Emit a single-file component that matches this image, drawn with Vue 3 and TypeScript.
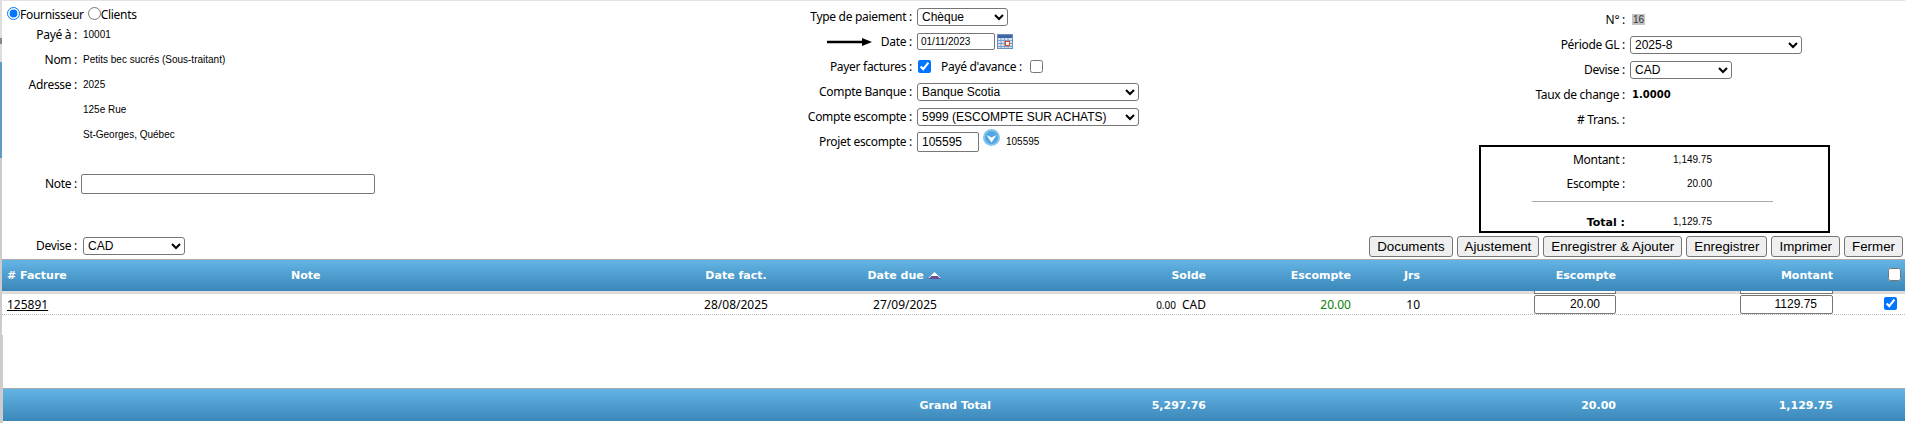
<template>
  <div class="page">
    <div class="edge"></div>

    <section class="top">
      <div class="col col-left">
        <div class="radios">
          <label><input type="radio" name="kind" checked />Fournisseur</label>
          <label><input type="radio" name="kind" />Clients</label>
        </div>
        <div v-for="line in addressLines" :key="line.value" class="row">
          <span class="lab lab-left">{{ line.label }}</span>
          <span class="val val-left">{{ line.value }}</span>
        </div>
        <div class="row note-row">
          <span class="lab lab-left">Note :</span>
          <input class="note-input" type="text" />
        </div>
        <div class="row devise-row">
          <span class="lab lab-left">Devise :</span>
          <select class="sel devise-left"><option>CAD</option></select>
        </div>
      </div>

      <div class="col col-mid">
        <div class="row">
          <span class="lab lab-mid">Type de paiement :</span>
          <select class="sel sel-type"><option>Chèque</option></select>
        </div>
        <div class="row">
          <span class="lab lab-mid lab-arrow">
            <svg class="arrow" width="46" height="10" viewBox="0 0 46 10">
              <path d="M0 5h36" stroke="#000" stroke-width="2.4" />
              <path d="M35 1l10 4-10 4z" fill="#000" />
            </svg>
            Date :
          </span>
          <input class="date-input" type="text" value="01/11/2023" />
          <svg class="cal" width="16" height="15" viewBox="0 0 16 15">
            <rect x="0.5" y="0.5" width="15" height="14" fill="#d5e2f2" stroke="#6d8fbd" />
            <rect x="1" y="1" width="14" height="3" fill="#3e66a3" />
            <path d="M1 6.500h14M1 9.500h14M1 12.500h14M4 4v10M7.500 4v10M11 4v10" stroke="#7f9fcb" />
            <rect x="8.500" y="7.500" width="4" height="4" fill="#fff" stroke="#e2461f" />
          </svg>
        </div>
        <div class="row">
          <span class="lab lab-mid">Payer factures :</span>
          <input class="check check-pay" type="checkbox" checked />
          <span class="lab advance">Payé d'avance :</span>
          <input class="check" type="checkbox" />
        </div>
        <div class="row">
          <span class="lab lab-mid">Compte Banque :</span>
          <select class="sel sel-wide"><option>Banque Scotia</option></select>
        </div>
        <div class="row">
          <span class="lab lab-mid">Compte escompte :</span>
          <select class="sel sel-wide"><option>5999 (ESCOMPTE SUR ACHATS)</option></select>
        </div>
        <div class="row">
          <span class="lab lab-mid">Projet escompte :</span>
          <input class="project-input" type="text" value="105595" />
          <svg class="drop" width="17" height="17" viewBox="0 0 17 17">
            <circle cx="8.500" cy="8.500" r="8.500" fill="#85c4ee" />
            <circle cx="8.500" cy="8.500" r="6.500" fill="#4fa6e2" />
            <path d="M3.500 6L8.500 13.500l5-7.500-5 2.500z" fill="#fff" />
          </svg>
          <span class="val project-code">105595</span>
        </div>
      </div>

      <div class="col col-right">
        <div class="row">
          <span class="lab lab-right">N° :</span>
          <span class="val trans-no">16</span>
        </div>
        <div class="row">
          <span class="lab lab-right">Période GL :</span>
          <select class="sel sel-period"><option>2025-8</option></select>
        </div>
        <div class="row">
          <span class="lab lab-right">Devise :</span>
          <select class="sel sel-devise"><option>CAD</option></select>
        </div>
        <div class="row">
          <span class="lab lab-right">Taux de change :</span>
          <b class="rate">1.0000</b>
        </div>
        <div class="row">
          <span class="lab lab-right"># Trans. :</span>
        </div>

        <div class="totals">
          <div class="total-row">
            <span class="lab lab-total">Montant :</span>
            <span class="val total-val">1,149.75</span>
          </div>
          <div class="total-row">
            <span class="lab lab-total">Escompte :</span>
            <span class="val total-val">20.00</span>
          </div>
          <div class="total-line"></div>
          <div class="total-row total-last">
            <span class="lab lab-total"><b class="total-strong">Total :</b></span>
            <span class="val total-val">1,129.75</span>
          </div>
        </div>

        <div class="toolbar">
          <button v-for="name in buttons" :key="name" type="button">{{ name }}</button>
        </div>
      </div>
    </section>

    <section class="grid-wrap">
      <div class="cols head">
        <span class="c-left pad-first"># Facture</span>
        <span class="c-left pad-note">Note</span>
        <span class="c-center">Date fact.</span>
        <span class="c-center due-head">
          Date due
          <svg class="sort" width="13" height="7" viewBox="0 0 13 7">
            <path d="M6.500 0L12.500 6H.5z" fill="#fff" />
            <path d="M3.500 4h6l3 3H.5z" fill="#6d4a92" />
          </svg>
        </span>
        <span class="c-right">Solde</span>
        <span class="c-right">Escompte</span>
        <span class="c-right">Jrs</span>
        <span class="c-right">Escompte</span>
        <span class="c-right">Montant</span>
        <span class="c-check head-check"><input class="check" type="checkbox" /></span>
      </div>

      <div class="cols band">
        <i></i><i></i><i></i><i></i><i></i><i></i><i></i>
        <i class="peek peek-disc"></i>
        <i class="peek peek-amount"></i>
        <i></i>
      </div>

      <div class="cols line">
        <span class="c-left pad-first"><a class="doc-link">125891</a></span>
        <span></span>
        <span class="c-center">28/08/2025</span>
        <span class="c-center">27/09/2025</span>
        <span class="c-right solde"><small>0.00</small><em>CAD</em></span>
        <span class="c-right disc">20.00</span>
        <span class="c-right">10</span>
        <span class="c-right"><input class="cell-input disc-input" type="text" value="20.00" /></span>
        <span class="c-right"><input class="cell-input amount-input" type="text" value="1129.75" /></span>
        <span class="c-check row-check"><input class="check" type="checkbox" checked /></span>
      </div>

      <div class="filler"></div>

      <div class="cols foot">
        <span></span>
        <span></span>
        <span></span>
        <span class="c-right grand">Grand Total</span>
        <span class="c-right">5,297.76</span>
        <span></span>
        <span></span>
        <span class="c-right">20.00</span>
        <span class="c-right">1,129.75</span>
        <span></span>
      </div>
    </section>
  </div>
</template>

<script setup lang="ts">
const addressLines: { label: string; value: string }[] = [
  { label: 'Payé à :', value: '10001' },
  { label: 'Nom :', value: 'Petits bec sucrés (Sous-traitant)' },
  { label: 'Adresse :', value: '2025' },
  { label: '', value: '125e Rue' },
  { label: '', value: 'St-Georges, Québec' }
];

const buttons: string[] = [
  'Documents',
  'Ajustement',
  'Enregistrer & Ajouter',
  'Enregistrer',
  'Imprimer',
  'Fermer'
];
</script>

<style>
html,
body {
  background: #fff;
  overflow: hidden;
}
</style>

<style scoped>
.page {
  position: relative;
  display: flex;
  flex-direction: column;
  width: 1905px;
  height: 423px;
  font-family: 'Noto Sans', 'Open Sans', sans-serif;
  font-size: 12px;
  color: #000;
  background: #fff;
}
.edge {
  position: absolute;
  left: 0;
  top: 0;
  width: 2px;
  height: 423px;
  background: linear-gradient(
    to bottom,
    #ddd 0,
    #ddd 38px,
    #888 38px,
    #888 44px,
    #ddd 44px,
    #ddd 62px,
    #5d9bc4 62px,
    #5d9bc4 158px,
    #ccc 158px,
    #ccc 100%
  );
}
.edge::after {
  content: '';
  position: absolute;
  left: 2px;
  top: 335px;
  width: 1px;
  height: 88px;
  background: #ccc;
}

.top {
  display: flex;
  height: 259px;
  flex: none;
  border-top: 1px solid #e2e2e2;
  box-sizing: border-box;
}
.col {
  display: flex;
  flex-direction: column;
  box-sizing: border-box;
}
.col-left {
  width: 760px;
}
.col-mid {
  width: 440px;
  padding-top: 3px;
}
.col-right {
  width: 705px;
  padding-top: 6px;
}

.row {
  display: flex;
  align-items: center;
  height: 25px;
  flex: none;
}
.lab {
  flex: none;
  text-align: right;
  white-space: nowrap;
  letter-spacing: -0.3px;
}
.lab-left {
  width: 77px;
  margin-right: 6px;
}
.lab-mid {
  width: 152px;
  margin-right: 5px;
}
.lab-right {
  width: 425px;
  margin-right: 7px;
}
.lab-arrow {
  display: flex;
  justify-content: flex-end;
  align-items: center;
  gap: 6px;
}
.arrow {
  margin-right: 2px;
}
.val {
  font-family: 'Liberation Sans', Arial, sans-serif;
  font-size: 10px;
  white-space: nowrap;
}

.radios {
  display: flex;
  height: 21px;
  padding-left: 7px;
  padding-top: 5px;
  align-items: center;
  gap: 4px;
  box-sizing: border-box;
  letter-spacing: -0.3px;
}
.radios label {
  display: flex;
  align-items: center;
}
.radios input {
  width: 13px;
  height: 13px;
  margin: -2px 0 0;
}

.note-row {
  margin-top: 24px;
}
.note-input {
  width: 294px;
  height: 20px;
  margin-left: -2px;
  box-sizing: border-box;
  border: 1px solid #767676;
  border-radius: 2px;
}
.devise-row {
  margin-top: auto;
  margin-bottom: 1px;
}

.sel {
  height: 18px;
  padding: 0;
  box-sizing: border-box;
  border: 1px solid #767676;
  border-radius: 3px;
  background: #fff;
  font-family: 'Liberation Sans', Arial, sans-serif;
  font-size: 12px;
  color: #000;
}
.devise-left {
  width: 102px;
}
.sel-type {
  width: 91px;
}
.sel-wide {
  width: 222px;
}
.sel-period {
  width: 172px;
  margin-left: -2px;
}
.sel-devise {
  width: 102px;
  margin-left: -2px;
}

.date-input {
  width: 78px;
  height: 17px;
  padding: 0 3px;
  box-sizing: border-box;
  border: 1px solid #767676;
  border-radius: 2px;
  font-family: 'Liberation Sans', Arial, sans-serif;
  font-size: 10px;
}
.cal {
  margin-left: 2px;
}
.check {
  width: 13px;
  height: 13px;
  margin: 0;
}
.check-pay {
  margin-left: 1px;
}
.advance {
  margin-left: 10px;
  margin-right: 8px;
}
.project-input {
  width: 62px;
  height: 20px;
  padding: 0 4px;
  box-sizing: border-box;
  border: 1px solid #767676;
  border-radius: 2px;
  font-family: 'Liberation Sans', Arial, sans-serif;
  font-size: 12px;
}
.drop {
  margin-left: 4px;
  margin-bottom: 8px;
}
.project-code {
  margin-left: 6px;
}

.trans-no {
  background: #c4c4c4;
  color: #333;
  padding: 0 1px;
}
.rate {
  font-family: 'DejaVu Sans', sans-serif;
  font-size: 10px;
}

.totals {
  width: 351px;
  height: 88px;
  margin-top: 13px;
  margin-left: 279px;
  box-sizing: border-box;
  border: 2px solid #000;
  flex: none;
}
.total-row {
  display: flex;
  align-items: center;
  height: 25px;
}
.total-row:first-child {
  height: 24px;
}
.total-last {
  height: 20px;
}
.lab-total {
  width: 144px;
}
.total-strong {
  font-family: 'DejaVu Sans', sans-serif;
  font-size: 11px;
  letter-spacing: 0;
}
.total-val {
  width: 87px;
  text-align: right;
}
.total-line {
  width: 241px;
  height: 1px;
  margin: 5px 0 9px 51px;
  background: #aaa;
}

.toolbar {
  display: flex;
  justify-content: flex-end;
  gap: 4px;
  margin-top: 3px;
  padding-right: 2px;
}
.toolbar button {
  height: 21px;
  padding: 0 7px;
  border: 1px solid #767676;
  border-radius: 3px;
  background: #efefef;
  font-family: 'Liberation Sans', Arial, sans-serif;
  font-size: 13.33px;
  color: #000;
  white-space: nowrap;
}

.grid-wrap {
  display: flex;
  flex-direction: column;
  flex: none;
  height: 162px;
}
.cols {
  display: grid;
  grid-template-columns: 289px 377px 140px 198px 202px 145px 69px 196px 217px 72px;
  align-items: center;
}
.head,
.foot {
  box-sizing: border-box;
  border-top: 1px solid #aaa;
  background: linear-gradient(to bottom, #63b4e5, #3b87b9);
  color: #fff;
  font-family: 'DejaVu Sans', sans-serif;
  font-size: 11px;
  font-weight: 700;
  flex: none;
}
.head {
  height: 32px;
}
.foot {
  height: 33px;
  margin-left: 3px;
  grid-template-columns: 286px 377px 140px 198px 202px 145px 69px 196px 217px 72px;
}
.c-left {
  text-align: left;
}
.c-center {
  text-align: center;
}
.c-right {
  text-align: right;
}
.c-check {
  display: flex;
}
.pad-first {
  padding-left: 7px;
}
.pad-note {
  padding-left: 2px;
}
.due-head {
  position: relative;
  left: -1px;
}
.head-check {
  padding-left: 55px;
  margin-top: -2px;
}
.row-check {
  padding-left: 51px;
  margin-top: -2px;
}

.band {
  height: 3px;
  flex: none;
  background: #ddd;
  align-items: stretch;
}
.peek {
  display: block;
  margin-left: auto;
  background: #fff;
  border: 1px solid #767676;
  border-width: 0 1px 1px;
  box-sizing: border-box;
}
.peek-disc {
  width: 82px;
}
.peek-amount {
  width: 93px;
}

.line {
  height: 21px;
  flex: none;
  padding-top: 1px;
  box-sizing: border-box;
  border-bottom: 1px dotted #bbb;
}
.doc-link {
  color: #000;
  text-decoration: underline;
}
.solde {
  display: flex;
  justify-content: flex-end;
  align-items: center;
  gap: 6px;
}
.solde small {
  font-size: 10px;
}
.solde em {
  font-style: normal;
}
.disc {
  color: #0a7d0a;
}
.cell-input {
  display: block;
  height: 19px;
  margin-left: auto;
  margin-top: -1px;
  padding: 0 15px 0 0;
  box-sizing: border-box;
  border: 1px solid #767676;
  border-radius: 2px;
  font-family: 'Liberation Sans', Arial, sans-serif;
  font-size: 12px;
  text-align: right;
}
.disc-input {
  width: 82px;
}
.amount-input {
  width: 93px;
}

.filler {
  flex: 1;
}
.grand {
  padding-right: 13px;
}
</style>
